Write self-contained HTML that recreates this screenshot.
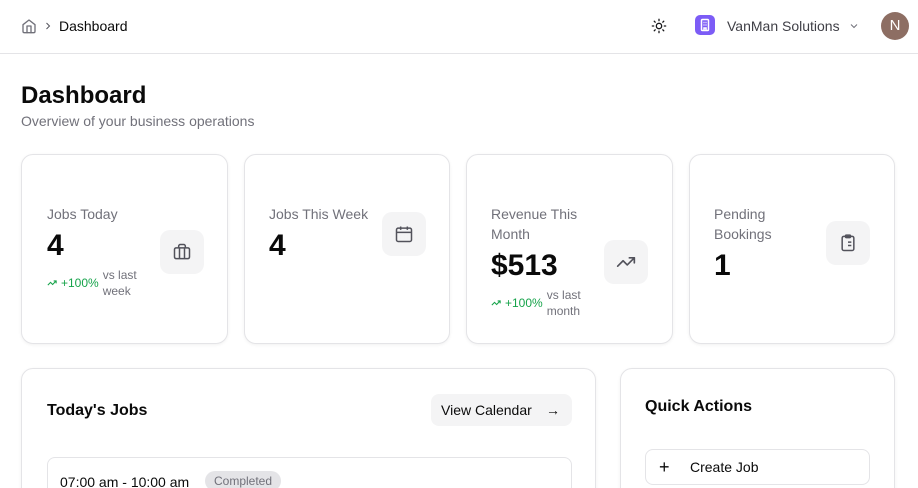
<!DOCTYPE html>
<html><head><style>
*{margin:0;padding:0;box-sizing:border-box}
html,body{width:918px;height:488px;overflow:hidden}
body{background:#fff;font-family:"Liberation Sans",sans-serif;color:#0a0a0a;position:relative}
.a{position:absolute}
.card{position:absolute;border:1px solid #e4e4e7;border-radius:12px;background:#fff;box-shadow:0 1px 3px rgba(0,0,0,.06)}
.lbl{position:absolute;font-size:14px;color:#71717a;line-height:20px}
.num{position:absolute;font-size:30px;font-weight:bold;line-height:34px}
.ib{position:absolute;width:44px;height:44px;border-radius:10px;background:#f4f4f5;display:flex;align-items:center;justify-content:center}
.tr{position:absolute;font-size:12px;line-height:16px;color:#71717a;display:flex;align-items:center;gap:4px}
.g{color:#16a34a;display:flex;align-items:center;gap:4px}
svg{display:block}
</style></head><body>
<svg class="a" style="left:21px;top:18px" width="16" height="16" viewBox="0 0 24 24" fill="none" stroke="#71717a" stroke-width="2" stroke-linecap="round" stroke-linejoin="round"><path d="M3 10l9-7 9 7v10a2 2 0 0 1-2 2H5a2 2 0 0 1-2-2z"/><path d="M9 22V12h6v10"/></svg>
<svg class="a" style="left:42px;top:20px" width="12" height="12" viewBox="0 0 24 24" fill="none" stroke="#52525b" stroke-width="2"><path d="M9 6l6 6-6 6"/></svg>
<div class="a" style="left:59px;top:17px;font-size:14px;line-height:18px">Dashboard</div>
<svg class="a" style="left:651px;top:18px" width="16" height="16" viewBox="0 0 24 24" fill="none" stroke="#18181b" stroke-width="2" stroke-linecap="round"><circle cx="12" cy="12" r="4"/><path d="M12 2v2M12 20v2M4.9 4.9l1.4 1.4M17.7 17.7l1.4 1.4M2 12h2M20 12h2M4.9 19.1l1.4-1.4M17.7 6.3l1.4-1.4"/></svg>
<div class="a" style="left:695px;top:15px;width:20px;height:20px;border-radius:5px;background:#7c5cf6"><svg width="20" height="20" viewBox="0 0 20 20" fill="none" stroke="#fff" stroke-width="1.5"><rect x="6.5" y="4.5" width="7" height="11" rx="1"/><path d="M8.5 7.5h1M10.5 7.5h1M8.5 10h1M10.5 10h1M9 15v-2h2v2"/></svg></div>
<div class="a" style="left:727px;top:17px;font-size:14px;line-height:18px;color:#3f3f46">VanMan Solutions</div>
<svg class="a" style="left:848px;top:20px" width="12" height="12" viewBox="0 0 24 24" fill="none" stroke="#71717a" stroke-width="2"><path d="M6 9l6 6 6-6"/></svg>
<div class="a" style="left:881px;top:12px;width:28px;height:28px;border-radius:50%;background:#8d6e63;color:#fff;font-size:15px;line-height:28px;text-align:center">N</div>
<div class="a" style="left:0;top:53px;width:918px;height:1px;background:#e4e4e7"></div>

<div class="a" style="left:21px;top:82px;font-size:24px;font-weight:bold;line-height:28px">Dashboard</div>
<div class="a" style="left:21px;top:112px;font-size:14px;color:#71717a;line-height:18px">Overview of your business operations</div>

<div class="card" style="left:21px;top:154px;width:207px;height:190px">
<div class="lbl" style="left:25px;top:49px">Jobs Today</div>
<div class="num" style="left:25px;top:74px">4</div>
<div class="tr" style="left:25px;top:112px"><span class="g"><svg width="10" height="10" viewBox="0 0 24 24" fill="none" stroke="#16a34a" stroke-width="2.5"><path d="M22 7l-8.5 8.5-5-5L2 17M16 7h6v6"/></svg>+100%</span><span>vs last<br>week</span></div>
<div class="ib" style="left:138px;top:75px"><svg width="20" height="20" viewBox="0 0 24 24" fill="none" stroke="#52525b" stroke-width="1.8"><rect x="3" y="7" width="18" height="13" rx="2"/><path d="M8 7V5a2 2 0 0 1 2-2h4a2 2 0 0 1 2 2v2M9 7v13M15 7v13"/></svg></div>
</div>
<div class="card" style="left:244px;top:154px;width:206px;height:190px">
<div class="lbl" style="left:24px;top:49px">Jobs This Week</div>
<div class="num" style="left:24px;top:74px">4</div>
<div class="ib" style="left:137px;top:57px"><svg width="20" height="20" viewBox="0 0 24 24" fill="none" stroke="#52525b" stroke-width="1.8"><rect x="3" y="5" width="18" height="16" rx="2"/><path d="M8 3v4M16 3v4M3 10h18M8 14h.01M12 14h.01M16 14h.01M8 17h.01M12 17h.01M16 17h.01"/></svg></div>
</div>
<div class="card" style="left:466px;top:154px;width:207px;height:190px">
<div class="lbl" style="left:24px;top:49px">Revenue This<br>Month</div>
<div class="num" style="left:24px;top:94px">$513</div>
<div class="tr" style="left:24px;top:132px"><span class="g"><svg width="10" height="10" viewBox="0 0 24 24" fill="none" stroke="#16a34a" stroke-width="2.5"><path d="M22 7l-8.5 8.5-5-5L2 17M16 7h6v6"/></svg>+100%</span><span>vs last<br>month</span></div>
<div class="ib" style="left:137px;top:85px"><svg width="20" height="20" viewBox="0 0 24 24" fill="none" stroke="#52525b" stroke-width="2" stroke-linecap="round" stroke-linejoin="round"><path d="M22 7l-8.5 8.5-5-5L2 17"/><path d="M16 7h6v6"/></svg></div>
</div>
<div class="card" style="left:689px;top:154px;width:206px;height:190px">
<div class="lbl" style="left:24px;top:49px">Pending<br>Bookings</div>
<div class="num" style="left:24px;top:94px">1</div>
<div class="ib" style="left:136px;top:66px"><svg width="20" height="20" viewBox="0 0 24 24" fill="none" stroke="#52525b" stroke-width="1.8"><rect x="5" y="4" width="14" height="17" rx="2"/><rect x="9" y="2.5" width="6" height="3" rx="1"/><path d="M9 11h.01M12 11h4M9 15h.01M12 15h4"/></svg></div>
</div>

<div class="card" style="left:21px;top:368px;width:575px;height:140px">
<div class="a" style="left:25px;top:32px;font-size:16px;font-weight:600;line-height:20px">Today's Jobs</div>
<div class="a" style="left:409px;top:25px;width:141px;height:32px;border-radius:8px;background:#f4f4f5;font-size:14px;line-height:32px;padding-left:10px">View Calendar <span style="position:absolute;right:12px">→</span></div>
<div class="a" style="left:25px;top:88px;width:525px;height:45px;border:1px solid #e4e4e7;border-bottom:none;border-radius:8px 8px 0 0">
<div class="a" style="left:12px;top:15px;font-size:14px;line-height:18px">07:00 am - 10:00 am</div>
<div class="a" style="left:157px;top:13px;height:20px;padding:0 9px;border-radius:10px;background:#e4e4e7;color:#71717a;font-size:12px;line-height:20px">Completed</div>
</div>
</div>
<div class="card" style="left:620px;top:368px;width:275px;height:140px">
<div class="a" style="left:24px;top:28px;font-size:16px;font-weight:600;line-height:20px">Quick Actions</div>
<div class="a" style="left:24px;top:80px;width:225px;height:36px;border:1px solid #e4e4e7;border-radius:8px;font-size:14px;line-height:34px">
<span class="a" style="left:13px;font-size:18px">+</span><span class="a" style="left:44px">Create Job</span></div>
</div>
</body></html>
